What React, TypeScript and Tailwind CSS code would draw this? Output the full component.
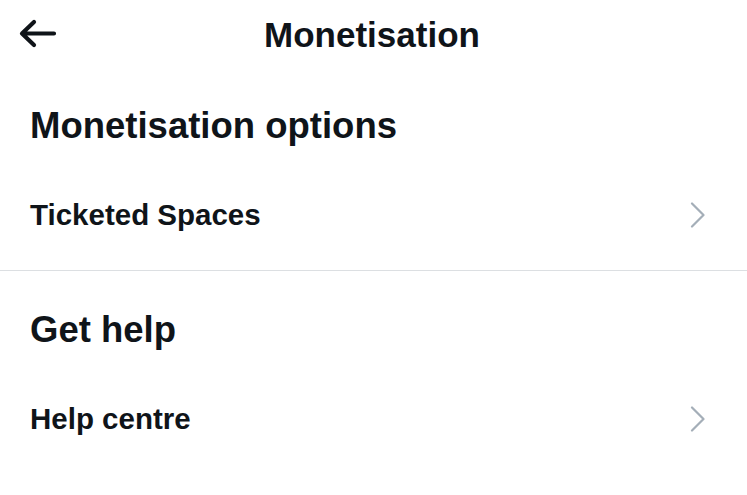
const font = { fontFamily: '"Liberation Sans", Arial, sans-serif' };

function Chevron() {
    return (
        <svg width="16" height="26" viewBox="0 0 16 26" fill="none" className="shrink-0">
            <path d="M2 1.5 L13.5 13 L2 24.5" stroke="#a4aeb8" strokeWidth="2.2" strokeLinecap="round" strokeLinejoin="round" />
        </svg>
    );
}

function Row({ label }: { label: string }) {
    return (
        <div className="h-[70px] flex items-center justify-between pl-[30px] pr-[41px]">
            <span className="text-[29.5px] font-bold text-[#0f1419] leading-none">{label}</span>
            <Chevron />
        </div>
    );
}

function SectionTitle({ title }: { title: string }) {
    return (
        <div className="h-[108px] flex items-center pl-[30px]">
            <h2 className="text-[36.5px] font-bold text-[#0f1419] leading-none">{title}</h2>
        </div>
    );
}

export default function App() {
    return (
        <div className="w-[747px] h-[495px] bg-white overflow-hidden" style={font}>
            <header className="relative h-[72px] flex items-center justify-center">
                <button type="button" className="absolute left-[18px] top-[18px] p-0" aria-label="Back">
                    <svg width="40" height="32" viewBox="0 0 40 32" fill="none">
                        <path d="M36 15.5 H5 M16 4 L4 15.5 L16 27" stroke="#0f1419" strokeWidth="4.2" strokeLinecap="round" strokeLinejoin="round" />
                    </svg>
                </button>
                <h1 className="text-[35px] font-bold text-[#0f1419] leading-none mb-[3px] mr-[3px]">Monetisation</h1>
            </header>

            <section className="pb-[20px] border-b border-[#dcdfe2]">
                <SectionTitle title="Monetisation options" />
                <Row label="Ticketed Spaces" />
            </section>

            <section className="pt-[5px]">
                <SectionTitle title="Get help" />
                <Row label="Help centre" />
            </section>
        </div>
    );
}
